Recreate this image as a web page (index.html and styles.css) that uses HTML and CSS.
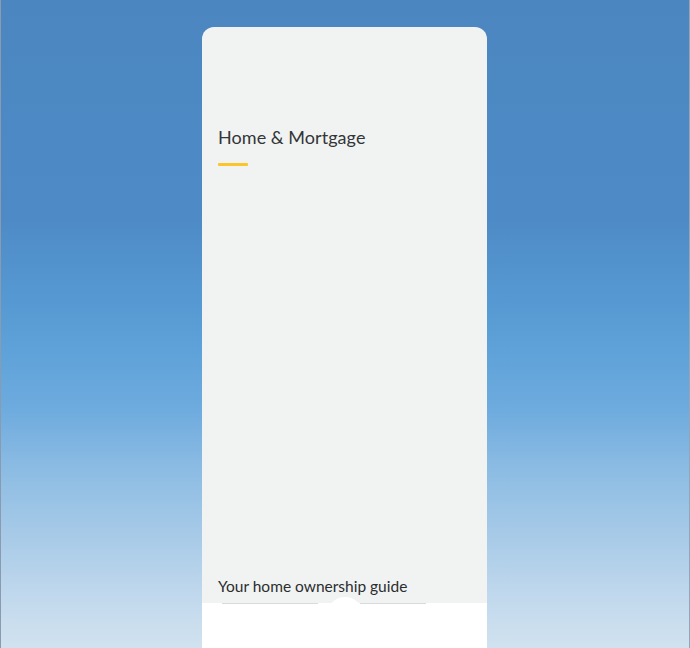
FILE: index.html
```html
<!DOCTYPE html>
<html lang="en">
<head>
<meta charset="utf-8">
<title>Home &amp; Mortgage</title>
<link rel="stylesheet" href="styles.css">
</head>
<body>
<div class="screen">
  <div class="card">
    <div class="hero">
      <h1 class="title">Home &amp; Mortgage</h1>
      <div class="accent"></div>
    </div>
    <div class="spacer"></div>
    <p class="subtitle">Your home ownership guide</p>
    <div class="panel">
      <div class="tabs">
        <span class="tab tab-a"></span>
        <span class="tab tab-b"></span>
      </div>
      <span class="bump"></span>
    </div>
  </div>
</div>
</body>
</html>
```
FILE: styles.css
```css
html, body {
  margin: 0;
  padding: 0;
  height: 100%;
  overflow: hidden;
}
body {
  font-family: Lato, "Open Sans", sans-serif;
}
.screen {
  height: 648px;
  box-sizing: border-box;
  padding-top: 27px;
  border-left: 1px solid #8a9bb0;
  border-right: 1px solid #8fa6bd;
  background: linear-gradient(to bottom,
    #4b86c0 0px,
    #4e8bc6 220px,
    #5699d2 300px,
    #5ea2d9 350px,
    #6eabde 410px,
    #8cbce3 470px,
    #a9cbe8 540px,
    #c2d9ed 600px,
    #d1e2ef 648px);
  display: flex;
  justify-content: center;
  overflow: hidden;
}
.card {
  width: 285px;
  margin-right: 1px;
  height: 640px;
  background: #f1f3f2;
  border-radius: 12px 12px 0 0;
  display: flex;
  flex-direction: column;
  overflow: hidden;
}
.hero {
  padding: 98px 16px 0;
}
.title {
  margin: 0;
  font-weight: 400;
  font-size: 18px;
  line-height: 24px;
  color: #333538;
  letter-spacing: 0.05px;
}
.accent {
  width: 30px;
  height: 3px;
  margin-top: 14px;
  background: #fbc52c;
  border-radius: 1px;
}
.spacer {
  flex: 0 0 410px;
}
.subtitle {
  margin: 0;
  padding: 0 16px;
  font-size: 15.5px;
  line-height: 20px;
  color: #2b2d2f;
}
.panel {
  position: relative;
  flex: 1;
  margin-top: 7px;
  background: #ffffff;
}
.tabs {
  display: flex;
  gap: 42px;
  padding-left: 20px;
}
.tab {
  height: 1px;
  background: #d8dbdc;
}
.tab-a { width: 96px; }
.tab-b { width: 66px; }
.bump {
  position: absolute;
  left: 125px;
  top: -6px;
  width: 36px;
  height: 36px;
  border-radius: 50%;
  background: #ffffff;
}
```
